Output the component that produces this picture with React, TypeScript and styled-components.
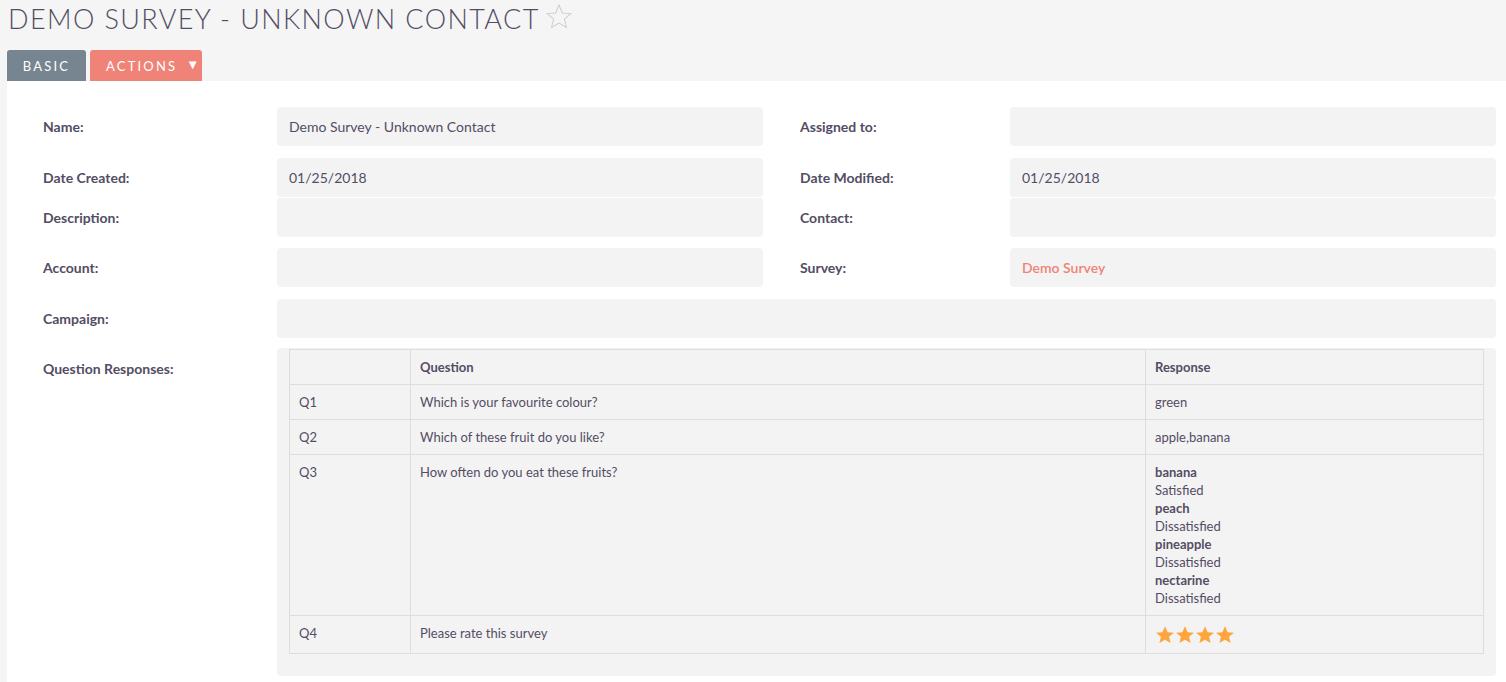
import React from "react";
import styled, { createGlobalStyle } from "styled-components";

const Global = createGlobalStyle`
  html, body { margin: 0; padding: 0; background: #f5f5f5; }
  body { font-family: Lato, "Open Sans", sans-serif; color: #534d64; }
`;

const Page = styled.div`
  padding-left: 7px;
  min-height: 682px;
  display: flex;
  flex-direction: column;
`;

const TitleBar = styled.div`
  height: 50px;
  display: flex;
  align-items: flex-start;
  gap: 5px;
`;

const Title = styled.h1`
  margin: 0;
  margin-left: 1px;
  padding-top: 3px;
  font-family: Lato, sans-serif;
  font-weight: 300;
  font-size: 27px;
  line-height: 32px;
  letter-spacing: 1.4px;
  color: #534d64;
  white-space: nowrap;
`;

const StarOutline = styled.svg`
  margin-top: 3px;
  width: 28px;
  height: 27px;
`;

const Tabs = styled.div`
  display: flex;
  gap: 4px;
  height: 31px;
`;

const Tab = styled.div<{ $bg: string; $w: number; $pl?: number }>`
  width: ${(p) => p.$w}px;
  background: ${(p) => p.$bg};
  border-radius: 3px 3px 0 0;
  color: #fff;
  font-family: Lato, sans-serif;
  font-size: 13px;
  letter-spacing: 2.2px;
  display: flex;
  align-items: center;
  justify-content: ${(p) => (p.$pl ? "flex-start" : "center")};
  padding-left: ${(p) => p.$pl ?? 0}px;
  gap: 9px;
  padding-top: 1px;
  box-sizing: border-box;
`;

const Caret = styled.span`
  display: block;
  font-size: 13px;
  line-height: 1;
  letter-spacing: 0;
  margin-top: -3px;
`;

const Panel = styled.div`
  flex: 1;
  background: #fff;
  padding: 26px 10px 7px 36px;
`;

const Row = styled.div<{ $mb: number; $top?: boolean }>`
  display: grid;
  grid-template-columns: 234px 486px 247px 486px;
  align-items: ${(p) => (p.$top ? "start" : "stretch")};
  margin-bottom: ${(p) => p.$mb}px;
`;

const Label = styled.div<{ $right?: boolean; $top?: boolean }>`
  display: flex;
  align-items: ${(p) => (p.$top ? "flex-start" : "center")};
  padding-left: ${(p) => (p.$right ? 37 : 0)}px;
  padding-top: ${(p) => (p.$top ? 12 : 0)}px;
  font-size: 14px;
  font-weight: 700;
  color: #534d64;
`;

const Value = styled.div<{ $span?: boolean; $link?: boolean }>`
  grid-column: ${(p) => (p.$span ? "2 / 5" : "auto")};
  height: 39px;
  background: #f3f3f3;
  border-radius: 4px;
  padding: 0 11px 1px 12px;
  display: flex;
  align-items: center;
  font-size: 14px;
  color: ${(p) => (p.$link ? "#f08377" : "#534d64")};
  font-weight: ${(p) => (p.$link ? 600 : 400)};
  box-sizing: border-box;
`;

const TableBox = styled.div`
  grid-column: 2 / 5;
  background: #f3f3f3;
  border-radius: 4px;
  padding: 1px 12px 22px 12px;
`;

const Table = styled.table`
  width: 100%;
  border-collapse: collapse;
  font-size: 13px;
  color: #534d64;
`;

const Th = styled.th<{ $w?: number }>`
  width: ${(p) => (p.$w ? `${p.$w}px` : "auto")};
  text-align: left;
  font-weight: 700;
  border: 1px solid #dddddd;
  padding: 8px 9px;
  line-height: 18px;
`;

const Td = styled.td`
  text-align: left;
  vertical-align: top;
  border: 1px solid #dddddd;
  padding: 8px 9px;
  line-height: 18px;
`;

const Bold = styled.div`
  font-weight: 700;
`;

const Stars = styled.div`
  display: flex;
  height: 20px;
  margin-top: 1px;
`;

const StarIcon = () => (
  <svg width="20" height="20" viewBox="0 0 24 24">
    <path
      d="M12 1.5l3.1 7.1 7.6.6-5.8 5 1.8 7.5L12 17.7l-6.7 4 1.8-7.5-5.8-5 7.6-.6z"
      fill="#ffa53e"
    />
  </svg>
);

const q3 = [
  ["banana", "Satisfied"],
  ["peach", "Dissatisfied"],
  ["pineapple", "Dissatisfied"],
  ["nectarine", "Dissatisfied"],
];

export default function App() {
  return (
    <>
      <Global />
      <Page>
        <TitleBar>
          <Title>DEMO SURVEY - UNKNOWN CONTACT</Title>
          <StarOutline viewBox="0 0 24 24">
            <path
              d="M12 1.8l3 7 7.5.6-5.7 4.9 1.8 7.4L12 17.8l-6.6 3.9 1.8-7.4-5.7-4.9 7.5-.6z"
              fill="none"
              stroke="#c9ced6"
              strokeWidth="0.9"
            />
          </StarOutline>
        </TitleBar>
        <Tabs>
          <Tab $bg="#778591" $w={79}>BASIC</Tab>
          <Tab $bg="#f08377" $w={112} $pl={16}>
            ACTIONS<Caret>▼</Caret>
          </Tab>
        </Tabs>
        <Panel>
          <Row $mb={12}>
            <Label>Name:</Label>
            <Value>Demo Survey - Unknown Contact</Value>
            <Label $right>Assigned to:</Label>
            <Value />
          </Row>
          <Row $mb={1}>
            <Label>Date Created:</Label>
            <Value>01/25/2018</Value>
            <Label $right>Date Modified:</Label>
            <Value>01/25/2018</Value>
          </Row>
          <Row $mb={11}>
            <Label>Description:</Label>
            <Value />
            <Label $right>Contact:</Label>
            <Value />
          </Row>
          <Row $mb={12}>
            <Label>Account:</Label>
            <Value />
            <Label $right>Survey:</Label>
            <Value $link>Demo Survey</Value>
          </Row>
          <Row $mb={10}>
            <Label>Campaign:</Label>
            <Value $span />
          </Row>
          <Row $mb={0} $top>
            <Label $top>Question Responses:</Label>
            <TableBox>
              <Table>
                <thead>
                  <tr>
                    <Th $w={102}></Th>
                    <Th $w={716}>Question</Th>
                    <Th>Response</Th>
                  </tr>
                </thead>
                <tbody>
                  <tr>
                    <Td>Q1</Td>
                    <Td>Which is your favourite colour?</Td>
                    <Td>green</Td>
                  </tr>
                  <tr>
                    <Td>Q2</Td>
                    <Td>Which of these fruit do you like?</Td>
                    <Td>apple,banana</Td>
                  </tr>
                  <tr>
                    <Td>Q3</Td>
                    <Td>How often do you eat these fruits?</Td>
                    <Td>
                      {q3.map(([f, s]) => (
                        <React.Fragment key={f}>
                          <Bold>{f}</Bold>
                          <div>{s}</div>
                        </React.Fragment>
                      ))}
                    </Td>
                  </tr>
                  <tr>
                    <Td>Q4</Td>
                    <Td>Please rate this survey</Td>
                    <Td>
                      <Stars>
                        {[0, 1, 2, 3].map((i) => (
                          <StarIcon key={i} />
                        ))}
                      </Stars>
                    </Td>
                  </tr>
                </tbody>
              </Table>
            </TableBox>
          </Row>
        </Panel>
      </Page>
    </>
  );
}
